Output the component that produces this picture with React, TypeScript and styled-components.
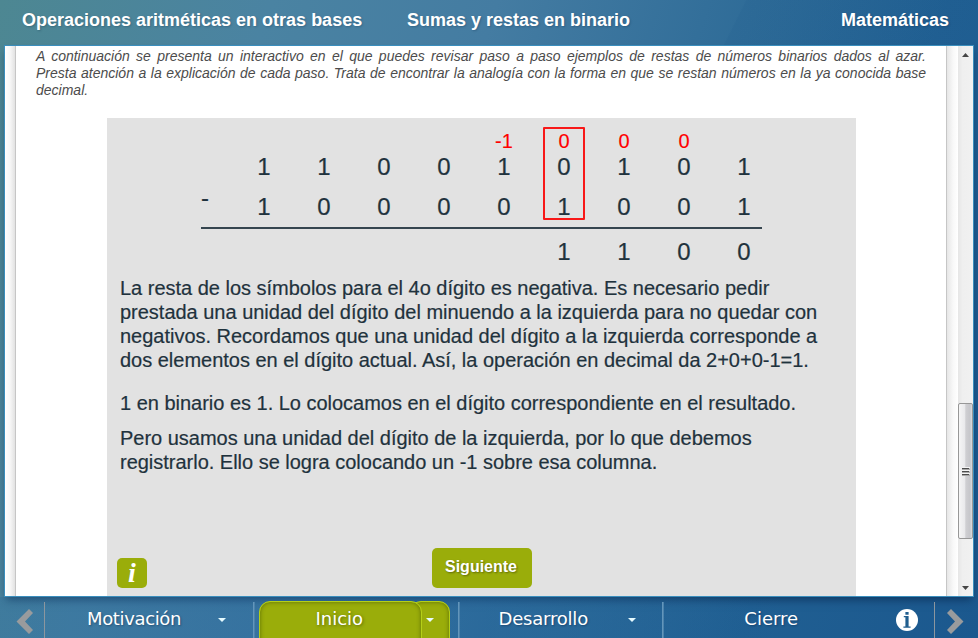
import React from 'react';
import styled, { createGlobalStyle } from 'styled-components';

const GlobalStyle = createGlobalStyle`
  * { box-sizing: border-box; }
  body { margin: 0; overflow: hidden; }
  p { margin: 0; }
`;

const Page = styled.div`
  display: flex;
  flex-direction: column;
  width: 978px;
  height: 638px;
  overflow: hidden;
  font-family: 'Liberation Sans', Arial, sans-serif;
  background: linear-gradient(108deg, #4d8792 0%, #4a83a2 23%, #447ca2 42%, #2f6c98 64%, #205f92 80%, #1b588e 100%);
`;

const Header = styled.header`
  display: flex;
  align-items: center;
  height: 45px;
  padding: 0 29px 4px 22px;
  background: linear-gradient(116.5deg, transparent 74.5%, rgba(10, 70, 125, 0.08) 74.7%, transparent 100%);
  color: #fff;
  font-size: 18px;
  font-weight: bold;
  text-shadow: 1px 1px 2px rgba(0, 30, 60, 0.25);
  white-space: nowrap;
`;

const HeaderText = styled.span<{ $width: number }>`
  width: ${(p) => p.$width}px;
`;

const Subject = styled.span`
  margin-left: auto;
`;

const Frame = styled.main`
  display: flex;
  width: 970px;
  height: 552px;
  margin-left: 4px;
  border: 1px solid #3a8ebd;
  background: #fff;
  box-shadow: 0 5px 8px -2px rgba(0, 25, 60, 0.5);
`;

const LeftGutter = styled.div`
  width: 11px;
  border-right: 1px solid #c6c6c6;
  background: linear-gradient(90deg, #fff, #f7f7f7 50%, #e2e2e2);
`;

const RightGutter = styled.div`
  width: 12px;
  border-left: 1px solid #c6c6c6;
  background: linear-gradient(90deg, #e6e6e6, #f8f8f8 55%, #fff);
`;

const Sheet = styled.article`
  display: flex;
  flex-direction: column;
  width: 930px;
  padding: 2px 20px 0;
`;

const Intro = styled.p`
  height: 70px;
  color: #4c4c4c;
  font-size: 14px;
  font-style: italic;
  line-height: 17px;
`;

const IntroLine = styled.span<{ $last?: boolean }>`
  display: block;
  text-align: justify;
  text-align-last: ${(p) => (p.$last ? 'left' : 'justify')};
`;

const Panel = styled.section`
  display: flex;
  flex-direction: column;
  width: 749px;
  height: 478px;
  margin-left: 71px;
  padding-top: 11px;
  background: #e2e2e2;
  color: #1f323d;
`;

const Sum = styled.div`
  position: relative;
  width: 561px;
  margin-left: 94px;
`;

const DigitRow = styled.div<{ $carry?: boolean; $gap?: number }>`
  display: grid;
  grid-template-columns: 33px repeat(9, 60px);
  height: ${(p) => (p.$carry ? 25 : 26)}px;
  margin-top: ${(p) => p.$gap ?? 0}px;
  line-height: ${(p) => (p.$carry ? 25 : 26)}px;
  font-size: ${(p) => (p.$carry ? 20 : 24)}px;
  color: ${(p) => (p.$carry ? '#ff0000' : 'inherit')};
  -webkit-text-stroke: ${(p) => (p.$carry ? '0.15px #ff0000' : '0.2px #1f323d')};
`;

const Digit = styled.span`
  text-align: center;
`;

const Sign = styled.span`
  margin-top: -9px;
`;

const Rule = styled.div`
  height: 2px;
  margin-top: 7px;
  background: #35454f;
`;

const Highlight = styled.div`
  position: absolute;
  left: 342px;
  top: -2px;
  width: 42px;
  height: 93px;
  border: 2px solid #f81818;
  border-radius: 1px;
`;

const Explanation = styled.div`
  display: flex;
  flex-direction: column;
  margin: 11px 0 0 13px;
  font-size: 20px;
  letter-spacing: -0.014px;
  line-height: 24px;
  white-space: nowrap;
  -webkit-text-stroke: 0.2px #1f323d;
`;

const Paragraph = styled.p<{ $gap?: number }>`
  margin-top: ${(p) => p.$gap ?? 0}px;
`;

const Line = styled.span`
  display: block;
`;

const Actions = styled.div`
  display: flex;
  align-items: flex-end;
  margin: auto 0 8px 10px;
`;

const HelpButton = styled.button`
  width: 30px;
  height: 30px;
  padding: 0;
  border: 0;
  border-radius: 5px;
  background: #9aad0a;
  color: #fff;
  font: italic bold 28px/28px 'Liberation Serif', 'Times New Roman', serif;
`;

const NextButton = styled.button`
  width: 100px;
  height: 40px;
  margin-left: 284.5px;
  padding: 0 1px 2px 0;
  border: 0;
  border-radius: 5px;
  background: #9aad0a;
  color: #fff;
  font: bold 16px 'Liberation Sans', Arial, sans-serif;
  text-shadow: 1px 1px 2px rgba(0, 0, 0, 0.4);
`;

const Scrollbar = styled.div`
  display: flex;
  flex-direction: column;
  align-items: center;
  width: 15px;
  padding: 7px 0 6px;
  background: linear-gradient(90deg, #e6e6e6, #efefef 30%, #f1f1f1);
`;

const Thumb = styled.div`
  display: flex;
  align-items: center;
  justify-content: center;
  width: 15px;
  height: 136px;
  margin: 346px 0 auto;
  border: 1px solid #979797;
  border-radius: 2px;
  background: linear-gradient(90deg, #f5f5f5, #e9e9eb 45%, #cfcfd2 52%, #c6c6ca 85%, #dcdcde);
`;

const Nav = styled.nav`
  display: flex;
  height: 41px;
  padding-top: 4px;
  background: linear-gradient(90deg, rgba(20, 90, 155, 0.22), rgba(20, 90, 155, 0.3) 25%, rgba(20, 90, 155, 0.3) 50%, transparent 80%);
  color: #fff;
  font: 18px 'DejaVu Sans', Verdana, sans-serif;
`;

const Edge = styled.div<{ $end?: boolean }>`
  display: flex;
  width: ${(p) => (p.$end ? 43 : 44)}px;
  padding: ${(p) => (p.$end ? '8px 0 0 11px' : '8px 0 0 16px')};
`;

const Divider = styled.div<{ $grey?: boolean }>`
  width: ${(p) => (p.$grey ? 1 : 2)}px;
  margin-top: 1px;
  background: ${(p) => (p.$grey ? '#8c969e' : 'linear-gradient(90deg, #6396bb 50%, #4c82ab 50%)')};
`;

const NavItem = styled.div<{ $width: number; $pad: number }>`
  display: flex;
  width: ${(p) => p.$width}px;
  padding-left: ${(p) => p.$pad}px;
  line-height: 36px;
  text-shadow: 1px 1px 2px rgba(0, 20, 50, 0.35);
`;

const NavLabel = styled.span<{ $width: number; $spacing?: number }>`
  width: ${(p) => p.$width}px;
  letter-spacing: ${(p) => p.$spacing ?? 0}px;
  white-space: nowrap;
`;

const ActiveTab = styled.div`
  display: flex;
  width: 203px;
  height: 46px;
`;

const TabMain = styled.div`
  z-index: 1;
  width: 163px;
  margin-left: 4px;
  padding-right: 2px;
  border: 1px solid #b5cf18;
  border-radius: 11px 11px 0 0;
  background: #9aad0a;
  box-shadow: inset 0 0 4px rgba(70, 85, 0, 0.7);
  line-height: 34px;
  text-align: center;
  text-shadow: 1px 1px 3px rgba(40, 50, 0, 0.5);
`;

const TabMenu = styled.div`
  width: 40px;
  margin-left: -12px;
  padding: 16px 0 0 15px;
  border: 1px solid #b5cf18;
  border-radius: 11px 11px 0 0;
  background: #9aad0a;
  box-shadow: inset 0 0 4px rgba(70, 85, 0, 0.7);
`;

const CaretSvg = styled.svg`
  display: block;
  flex: none;
`;

const CaretSlot = styled.span`
  padding-top: 17px;
`;

const InfoSlot = styled.span`
  display: flex;
  padding-top: 8px;
`;

const Caret = () => (
  <CaretSvg width="8" height="4" viewBox="0 0 8 4">
    <path d="M0 0h8L4 4z" fill="#e6fbff" />
  </CaretSvg>
);

const ScrollArrow = ({ down = false }: { down?: boolean }) => (
  <CaretSvg width="7" height="4" viewBox="0 0 7 4">
    <path d={down ? 'M0 0h7L3.5 4z' : 'M0 4h7L3.5 0z'} fill="#454545" />
  </CaretSvg>
);

const Grip = () => (
  <svg width="8" height="9" viewBox="0 0 8 9">
    <path d="M0 1.5h7M0 4.5h7M0 7.5h7" stroke="#4d4d4d" />
    <path d="M0 2.5h8M0 5.5h8M0 8.5h8" stroke="#a8a8a8" />
    <path d="M0 .5h8M0 3.5h8M0 6.5h8" stroke="#f4f4f4" />
  </svg>
);

const Chevron = ({ right = false }: { right?: boolean }) => (
  <svg width="18" height="25" viewBox="0 0 18 25">
    <path
      d={right ? 'M5 0 17.5 12.5 5 25 1 21 9 12.5 1 4z' : 'M13 0 .5 12.5 13 25l4-4-8-8.5L17 4z'}
      fill="#999b9d"
    />
  </svg>
);

const InfoIcon = () => (
  <svg width="22" height="22" viewBox="0 0 22 22">
    <circle cx="11" cy="11" r="11" fill="#fff" />
    <path d="M9.4 3h3.2v2.7H9.4zM7.8 7h4.8v10.6h2v1.2H7.4v-1.2h2V8.2H7.8z" fill="#205e8e" />
  </svg>
);

const Digits = ({ values }: { values: string[] }) => (
  <>
    {values.map((value, i) => (
      <Digit key={i}>{value}</Digit>
    ))}
  </>
);

export default function App() {
  return (
    <Page>
      <GlobalStyle />
      <Header>
        <HeaderText $width={385}>Operaciones aritméticas en otras bases</HeaderText>
        <HeaderText $width={240}>Sumas y restas en binario</HeaderText>
        <Subject>Matemáticas</Subject>
      </Header>
      <Frame>
        <LeftGutter />
        <Sheet>
          <Intro>
            <IntroLine>
              A continuación se presenta un interactivo en el que puedes revisar paso a paso ejemplos de restas de
              números binarios dados al azar.
            </IntroLine>
            <IntroLine>
              Presta atención a la explicación de cada paso. Trata de encontrar la analogía con la forma en que se
              restan números en la ya conocida base
            </IntroLine>
            <IntroLine $last>decimal.</IntroLine>
          </Intro>
          <Panel>
            <Sum>
              <DigitRow $carry>
                <span />
                <Digits values={['', '', '', '', '-1', '0', '0', '0', '']} />
              </DigitRow>
              <DigitRow>
                <span />
                <Digits values={['1', '1', '0', '0', '1', '0', '1', '0', '1']} />
              </DigitRow>
              <DigitRow $gap={14}>
                <Sign>-</Sign>
                <Digits values={['1', '0', '0', '0', '0', '1', '0', '0', '1']} />
              </DigitRow>
              <Rule />
              <DigitRow $gap={10}>
                <span />
                <Digits values={['', '', '', '', '', '1', '1', '0', '0']} />
              </DigitRow>
              <Highlight />
            </Sum>
            <Explanation>
              <Paragraph>
                <Line>La resta de los símbolos para el 4o dígito es negativa. Es necesario pedir</Line>
                <Line>prestada una unidad del dígito del minuendo a la izquierda para no quedar con</Line>
                <Line>negativos. Recordamos que una unidad del dígito a la izquierda corresponde a</Line>
                <Line>dos elementos en el dígito actual. Así, la operación en decimal da 2+0+0-1=1.</Line>
              </Paragraph>
              <Paragraph $gap={19}>
                <Line>1 en binario es 1. Lo colocamos en el dígito correspondiente en el resultado.</Line>
              </Paragraph>
              <Paragraph $gap={11}>
                <Line>Pero usamos una unidad del dígito de la izquierda, por lo que debemos</Line>
                <Line>registrarlo. Ello se logra colocando un -1 sobre esa columna.</Line>
              </Paragraph>
            </Explanation>
            <Actions>
              <HelpButton>i</HelpButton>
              <NextButton>Siguiente</NextButton>
            </Actions>
          </Panel>
        </Sheet>
        <RightGutter />
        <Scrollbar>
          <ScrollArrow />
          <Thumb>
            <Grip />
          </Thumb>
          <ScrollArrow down />
        </Scrollbar>
      </Frame>
      <Nav>
        <Edge>
          <Chevron />
        </Edge>
        <Divider $grey />
        <NavItem $width={208} $pad={42}>
          <NavLabel $width={131} $spacing={-0.35}>Motivación</NavLabel>
          <CaretSlot><Caret /></CaretSlot>
        </NavItem>
        <Divider />
        <ActiveTab>
          <TabMain>Inicio</TabMain>
          <TabMenu><Caret /></TabMenu>
        </ActiveTab>
        <Divider />
        <NavItem $width={203} $pad={39}>
          <NavLabel $width={129} $spacing={-0.2}>Desarrollo</NavLabel>
          <CaretSlot><Caret /></CaretSlot>
        </NavItem>
        <Divider />
        <NavItem $width={270} $pad={80}>
          <NavLabel $width={152}>Cierre</NavLabel>
          <InfoSlot><InfoIcon /></InfoSlot>
        </NavItem>
        <Divider $grey />
        <Edge $end>
          <Chevron right />
        </Edge>
      </Nav>
    </Page>
  );
}
